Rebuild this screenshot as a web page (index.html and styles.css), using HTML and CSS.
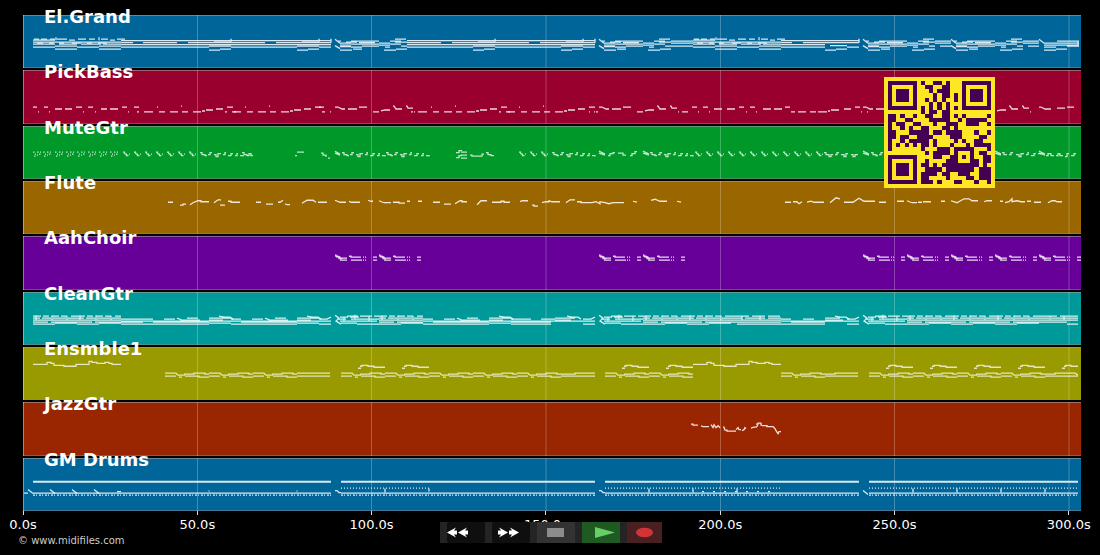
FILE: index.html
```html
<!DOCTYPE html>
<html lang="en">
<head>
<meta charset="utf-8">
<title>MIDI tracks</title>
<link rel="stylesheet" href="styles.css">
</head>
<body>
<svg class="defs" aria-hidden="true">
  <defs>
    <path id="grid" class="grid" d="M197.5 0v600M371.5 0v600M546 0v600M720.5 0v600M894.5 0v600M1069 0v600"/>
    <g id="pianoA">
      <path d="M0 40.5h22M0 42.5h88M0 44.5h22M26 44.5h18M48 44.5h20M70 44.5h18M0 47.5h22M44 47.5h22M22 46.5h22M66 46.5h22M22 49.5h22M66 49.5h22"/>
      <path d="M1 39.5h5m2 0h6m3 0h5m1-2v3m1-1h10m2 1h6m3-1h8m3 0h6m4-2v3m2-1h7m2 1h5m2-1h8M4 43.5h6m6 0h5m5 0h5m8 0h9m6 0h5m6 0h9"/>
    </g>
    <g id="pianoB">
      <path d="M0 41h88M0 43h12M23 43h11M45 43h43M12 43h11M0 45h88M0 47.500h66M66 50.500h11M77 49.500h11M66 46.500h22M71 42.500h17M88 39v3"/>
    </g>
    <g id="pianoLead">
      <path d="M0 41h22M0 43h12M0 45h22M0 47.500h22"/>
    </g>
    <g id="pianoC">
      <path d="M0 39.5l5 4M0 46l5 3M3 41.5h3M5 43.5h11M5 45.5h11M5 47h11M5 50.5h12M11 42.5h11M16 41.5h28M16 44.5h28M16 47.5h11M18 49.5h9M24 43h16M27 46.5h17M44 43.5h11M44 45.5h11M50 47.5h5M49 50.5h12M55 41.5h11M55 44.5h11M60 39.5h11M60 42.5h12M61 49.5h11M66 46.5h6"/>
    </g>
    <g id="pianoTail">
      <path d="M0 41h12M0 43h12M0 45h12M0 47.500h12M12 39v4"/>
    </g>
    <g id="bassB"><path d="M0 112.5h2m5 0h9m4-5h1m1 5h6m5 0h8m3-6h1m0 6h6m5 0h8m1-1h3m1-1h7m3-1h7m4-2h6m1 5h2"/></g>
    <g id="bassC"><path d="M0 107.5h3l4 2h3m3 0h9m2-2h8m6 5h6m2-1l4-1h5m3-4h1l2 3h6m4-3h1l1 2h5m1 4h1"/></g>
    <path id="hook" d="M0 151.5h1.500v1l1 1h1v1.500h2M6 153.5h1"/>
    <path id="buzz" d="M0 151.5h1.500M2 153.500h1M4 151.500h1.500M6 153.500h1.500M1 155.500h1.500M4 154.500h1M7 151.500h1"/>
    <g id="hooks"><use href="#hook"/><use href="#hook" x="11"/><use href="#hook" x="22"/></g>
    <path id="rattle" d="M0 152h2v2h3v1h2m1-1h2v-2h2m2 2h2v2h2v-3h3m2 1h2v-2h1m2 3h3v-2h2m2 2h2v-2h1m2 2h3v1"/>
    <g id="choir"><path d="M0 255.500h1v1h2v1h2v1h2M1 257h3v2h3M5 258.500h7M5 260.500h7M14 256.500h2v1h10M16 260.500h11M28 257.500h1M30 257.500h1M28 260.500h1M30 260.500h1M38 257.500h4M38 260.500h4"/></g>
    <g id="cleanA">
      <path d="M0 315.500h8m2 0h6m3 0h7m2 0h6m4 0h6M0 317.500h7m2 0h9m2 0h13m2 0h9M0 319.500h44M0 321.500h15m3 0h26M0 323.500h22M22 322.500h22M3 314.500v5M19 314.500v5M34 315v5"/>
    </g>
    <g id="cleanB"><path d="M0 318.500h10M0 320.500h88M10 321.500h56M21 318.500h11M34 317.500l5 2h5M44 317.500h11M42 319.500h15M66 317.500h22M66 319.500h14M76 315.500l5 1h6l3 2M66 322.500h22M0 323.500h66"/></g>
    <g id="cleanLead"><path d="M0 318.500h22M0 320.500h22M0 321.500h22M0 323.500h22"/></g>
    <g id="cleanTail"><path d="M0 318.500h8l4-2M0 320.500h12M0 323.500h12"/></g>
    <g id="cleanC"><path d="M0 314.500l4 3-3 3 5 3M2 318.500h9M5 320.500h37M5 316.500h8m2 0h9M16 318.500h28M12 315.500h11m2 0h12m2 0h5M6 322.500h16M22 323.500h22M9 316v5M20 314v5M34 315v5"/></g>
    <path id="ensHi" d="M0 368.500h3M2 366.500h2v-1h6v1h6v1h11"/>
    <path id="ensTune" d="M0 364.500h14v-2h4v1h3v2h10v1h12v-2h13v-3h3v1h5v1h8v-1h4v1h3v1h9"/>
    <path id="ensLo" d="M0 373.500h11l2 2h7M0 376.500h11M14 377.500h3M19 374.500h10v-1h11v1h4M20 376.500h14v1h10"/>
    <g id="ensRow"><use href="#ensLo"/><use href="#ensLo" x="44"/></g>
  </defs>
</svg>

<main class="player">
  <div class="chart">
    <section class="track blue"><h2>El.Grand</h2>
      <svg viewBox="23 15 1058 54" preserveAspectRatio="none"><use href="#grid"/>
        <g class="notes">
          <use href="#pianoA" x="33"/><use href="#pianoLead" x="121"/><use href="#pianoB" x="143"/><use href="#pianoB" x="231"/><use href="#pianoTail" x="319"/>
          <use href="#pianoC" x="335"/><use href="#pianoB" x="407"/><use href="#pianoB" x="495"/><use href="#pianoTail" x="583"/>
          <use href="#pianoC" x="599"/><path d="M671 41.500h22M671 43.500h22M671 46.500h22"/><use href="#pianoA" x="693"/>
          <path d="M781 41h78M781 43h11M803 43h22M781 45h44M781 47.500h44M825 43h34M825 50.500h11M836 49.500h11M830 46h17M847 47.500h12M859 39v4"/>
          <use href="#pianoC" x="863"/><path d="M935 41.500h16M935 43.500h16M940 46.500h11"/><use href="#pianoC" x="951"/><path d="M1023 41.500h16M1023 43.500h16M1028 46.500h11"/>
          <path d="M1039 39.500l5 4h35M1044 45.500h35M1044 47.500h12M1044 50.500h12M1056 49.500h11M1057 41.500h22M1067 46.500h12M1078 41v6"/>
        </g></svg>
    </section>
    <section class="track crimson"><h2>PickBass</h2>
      <svg viewBox="23 70 1058 54" preserveAspectRatio="none"><use href="#grid"/>
        <g class="notes">
          <path d="M33 107.500h4m1 5h1m5-5h4m1 5h1m5-3h7m3 0h7m4-2h6m1 5h1m4-5h5m2 5h1m5-3h6m3 0h8m4-2h5m1 5h1m5-5h5"/>
          <use href="#bassB" x="137"/><use href="#bassB" x="225"/><path d="M319 107.500h5m0 5h1m5 0h1"/>
          <use href="#bassC" x="335"/><use href="#bassB" x="411"/><use href="#bassB" x="499"/><path d="M589 112.500h1m4 0h1"/>
          <use href="#bassC" x="599"/>
          <path d="M682 112.500h6M692 107.500h5m1 5h1m4-5h5m1 5h1m4-3h8m5 0h8m4-2h5m2 5h1m3-5h5m1 5h1m6-3h8m3 0h8m3-2h5m1 5h4m3 0h8m4 0h6m2 0h9m1-1h2m1-1h8m5-1h7m4-2h5m1 5h1m5 0h1"/>
          <use href="#bassC" x="863"/><use href="#bassC" x="951"/><path d="M1039 107.500h2l4 2h6m6-1h8m2-1h7"/>
        </g></svg>
    </section>
    <section class="track green"><h2>MuteGtr</h2>
      <svg viewBox="23 125 1058 54" preserveAspectRatio="none"><use href="#grid"/>
        <g class="notes soft">
          <use href="#buzz" x="33"/><use href="#buzz" x="43"/><use href="#buzz" x="55"/><use href="#buzz" x="66"/><use href="#buzz" x="77"/><use href="#buzz" x="88"/><use href="#buzz" x="99"/><use href="#buzz" x="110"/>
          <use href="#hooks" x="123"/><use href="#hooks" x="156"/><use href="#hook" x="189"/><use href="#rattle" x="200"/><path d="M242 152h2v2h3v1h2v-2h2v2h2"/>
          <path d="M295 155h2M297 151.500h7M321 152.500h2v2h3v2M328 157.500h2"/>
          <path d="M335 150.500l5 3M335 152.500l5 2"/><use href="#rattle" x="342"/><use href="#rattle" x="386"/>
          <path d="M456 152h3v-2h3M456 157h3v-2h3M461 151.500h6M461 154.500h6M461 157.500h6"/><path d="M470 154.500h2v1h10v-2h2M486 152h2v2h3v1h3"/>
          <use href="#hooks" x="519"/><use href="#rattle" x="552"/>
          <path d="M599 150.500l6 3M599 152.500l6 2"/><path d="M608 155h2v-2h3v-1h2M618 152.500h5v2h3M630 155h2v-2h3v-2h2"/><path d="M643 150.500l6 3M643 152.500l6 2"/><use href="#rattle" x="650"/>
          <use href="#hooks" x="695"/><use href="#hooks" x="728"/><use href="#hooks" x="761"/><use href="#hooks" x="794"/><path d="M824 152h2v2h3v2h2v-2h2m2 0h2v-2h2m2 2h3v2h2v-3h2m3 1h2v2h2v-2h3"/>
          <path d="M863 150.500l6 3M863 152.500l6 2"/><use href="#rattle" x="871"/><path d="M995 150.500l6 3M995 152.500l6 2"/><path d="M1002 152h2v2h3m2 0h2v-2h2m3 2h3v2h2v-3h3m2 1h2v-2h1m2 3h3v-2h2m2 0h3"/><path d="M1039 150.500l6 3M1039 152.500l6 2M1046 155h2v-2h3v2h3m2 0h2v-2h2v2h3m2 1h2v-3h2m2 2h3v-2h2"/>
        </g></svg>
    </section>
    <section class="track brown"><h2>Flute</h2>
      <svg viewBox="23 181 1058 54" preserveAspectRatio="none"><use href="#grid"/>
        <g class="notes">
          <path d="M168 202.500h5M180 205.500h3v-1h3M190 205l3-2 5-2h3v1h8M214 203l4-3h3M220 205.500h5M228 201.500h3v1h9M256 202.500h5M266 204.500h7M278 202.500h2l3-2M285 204l2 1h3M302 203.500l5-3h6l3 2M318 202.500h9M335 200.500l5 2h6M349 201.500l2 1h9"/>
          <path d="M368 200.500l3 1h2M379 201l5 2h7M393 202.500h6v1h6M407 201.500h3M418 201.500h4M433 202.500h7M444 204.500h7M455 204l5-3h2v1h5M477 205l4-4h6M492 202.500h9v-1h3v1h6M520 202l2-1h6M532 205.500h2v1h4M542 203l4-1h3v-1l3 1h8M566 203l4-3h5M577 202h4v1h11l4-1 4 2v-2l5 1 4 1 4-1h11M633 201.500l4 1M651 200.500l4-1 5 2h7M677 201.500l4 1"/>
          <path d="M785 202.500h6M793 202h4l2 2 3-2M807 202.500l4-1 3 1h10M830 203l6-5 4 1M844 202.500h9l6-4 5 3h11M879 202.500h7M897 201.500h7M907 201l5 2h5M918 202.500h4M923 202h8M941 201.500h4M951 201l6 2 7-4h5l3 2h6M984 202l3-1h5M1000 201.500h3M1005 203l4-1 3-3v3l5-1 4 1h4M1027 201.500h4M1034 202.500h7M1048 203l4-2h3l2 1h5"/>
        </g></svg>
    </section>
    <section class="track purple"><h2>AahChoir</h2>
      <svg viewBox="23 236 1058 54" preserveAspectRatio="none"><use href="#grid"/>
        <g class="notes">
          <use href="#choir" x="335"/><use href="#choir" x="379"/><use href="#choir" x="599"/><use href="#choir" x="643"/><use href="#choir" x="863"/><use href="#choir" x="907"/><use href="#choir" x="951"/><use href="#choir" x="995"/><use href="#choir" x="1039"/>
        </g></svg>
    </section>
    <section class="track teal"><h2>CleanGtr</h2>
      <svg viewBox="23 291 1058 54" preserveAspectRatio="none"><use href="#grid"/>
        <g class="notes">
          <use href="#cleanA" x="33"/><use href="#cleanA" x="77"/><use href="#cleanLead" x="121"/><use href="#cleanB" x="143"/><use href="#cleanB" x="231"/><use href="#cleanTail" x="319"/>
          <use href="#cleanC" x="335"/><use href="#cleanA" x="379"/><use href="#cleanB" x="423"/><path d="M511 318.500h20M511 320.500h72M511 321.500h40M541 318.500h14M555 317.500h20M555 319.500h16M567 315.500l5 1h6l3 2M511 323.500h40"/><use href="#cleanTail" x="583"/>
          <use href="#cleanC" x="599"/><use href="#cleanA" x="643"/><use href="#cleanA" x="687"/><path d="M731 315.500h18m3 0h13m3 0h12M731 317.500h11m3 0h20m3 0h13M731 319.500h50M731 321.500h50M737 323.500h44M742 315v5M760 315v5"/>
          <path d="M781 318.500h10M781 320.500h66M791 321.500h34M803 318.500h11M781 323.500h44M825 317.500h15M825 319.500h18M835 315.500l5 1h6l3 2"/><use href="#cleanTail" x="847"/>
          <use href="#cleanC" x="863"/><use href="#cleanA" x="907"/><use href="#cleanA" x="951"/><use href="#cleanA" x="995"/><path d="M1039 315.500h18m3 0h18M1039 317.500h10m2 0h27M1039 319.500h39M1039 321.500h28M1067 323.500h11M1050 315v5M1064 315v5"/>
        </g></svg>
    </section>
    <section class="track olive"><h2>Ensmble1</h2>
      <svg viewBox="23 347 1058 54" preserveAspectRatio="none"><use href="#grid"/>
        <g class="notes soft">
          <use href="#ensTune" x="33"/><use href="#ensTune" x="693"/>
          <use href="#ensHi" x="358"/><use href="#ensHi" x="402"/><use href="#ensHi" x="622"/><use href="#ensHi" x="666"/><use href="#ensHi" x="886"/><use href="#ensHi" x="930"/><use href="#ensHi" x="974"/><use href="#ensHi" x="1018"/><path d="M1062 368.500h3M1064 366.500h2v-1h5v1h7"/>
          <use href="#ensRow" x="165"/><use href="#ensLo" x="253"/><path d="M297 373.500h33M297 376.500h33"/>
          <use href="#ensRow" x="341"/><use href="#ensRow" x="429"/><use href="#ensLo" x="517"/><path d="M561 374.500h14v-1h20M561 376.500h34"/>
          <use href="#ensRow" x="605"/><use href="#ensLo" x="781"/><path d="M825 374.500h10v-1h23M825 376.500h33"/>
          <use href="#ensRow" x="869"/><use href="#ensRow" x="957"/><path d="M1045 374.500h10v-1h20l3 2M1045 376.500h33"/>
        </g></svg>
    </section>
    <section class="track rust"><h2>JazzGtr</h2>
      <svg viewBox="23 402 1058 54" preserveAspectRatio="none"><use href="#grid"/>
        <g class="notes">
          <path d="M691 424.500h2v1h5M701 426l2 1h6M711 425l2 3 1-3 2 3 2-2 2 2M723 427.500h1l1 3h2v1h6M733 431.500h3M736 430l2-2 1 2h2M742 431l2-1 1-2 1 1M751 428.500l3-1h2l2-2M756 424.500h2v-1h3v2h1M762 426h5v1h6l2 2 1 2 2 3 1-2h2"/>
        </g></svg>
    </section>
    <section class="track blue"><h2>GM Drums</h2>
      <svg viewBox="23 457 1058 54" preserveAspectRatio="none"><use href="#grid"/>
        <g class="notes">
          <path class="thick" d="M33 481h298M341 481h254M605 481h254M869 481h209"/>
          <path d="M33 492.500h298M341 492.500h254M605 492.500h254M869 492.500h209"/>
          <path class="kick" d="M33 494.500h298M341 494.500h254M605 494.500h254M869 494.500h209"/>
          <path class="hat" d="M341 487.500h88M605 487.500h176M869 487.500h209"/>
          <path d="M24 492.500h4M28 489l5 4M50 489l5 4M72 489l5 4M94 489l5 4M117 491h4M335 490h2l2 2h2M599 490h2l2 2h2M863 490l5 4M209 490v1M297 490v1M385 488v4M429 488v3M649 488v4M693 488v4M702 491h2M713 491h2M724 491h2M735 491h2M746 491h2M757 491h2M768 491h2M737 488v4M913 488v4M957 488v4M1001 488v4M1045 488v4"/>
        </g></svg>
    </section>

    <svg class="qr" viewBox="-1 -1 27 27" role="img" aria-label="QR code">
      <rect class="paper" x="-1" y="-1" width="27" height="27"/>
      <g class="finder">
        <path d="M.5.5h6v6h-6zM18.500.5h6v6h-6zM.5 18.500h6v6h-6zM16.500 16.500h4v4h-4z"/>
        <path class="dot" d="M2 2h3v3h-3zM20 2h3v3h-3zM2 20h3v3h-3zM18 18h1v1h-1z"/>
      </g>
      <path class="cells" d="M8 .5h1m2 0h2m1 0h1M9 1.500h2m2 0h2M10 2.500h1m1 0h3M11 3.500h1m1 0h2m1 0h1M9 4.500h1m1 0h1m1 0h1m2 0h1M10 5.500h1m1 0h1m1 0h1M8 6.500h1m1 0h1m1 0h1m1 0h1m1 0h1M8 7.500h1m1 0h2m1 0h2
      M0 8.500h2m1 0h1m2 0h1m2 0h2m2 0h2m1 0h1m1 0h1m5 0h1
      M0 9.500h2m2 0h2m4 0h5m2 0h1m1 0h5
      M0 10.500h1m1 0h2m2 0h2m3 0h1m2 0h3m2 0h3m2 0h1
      M0 11.500h1m2 0h1m1 0h1m2 0h2m3 0h2m1 0h1
      M0 12.500h2m3 0h5m1 0h2m1 0h4m3 0h1m2 0h1
      M0 13.500h2m1 0h2m2 0h4m4 0h3m4 0h2
      M0 14.500h1m2 0h1m1 0h5m1 0h1m4 0h1m1 0h1m2 0h2
      M0 15.500h1m1 0h1m1 0h1m1 0h1m1 0h2m1 0h1m3 0h1m3 0h1m1 0h4
      M0 16.500h1m7 0h1m3 0h3m9 0h1M9 17.500h1m1 0h4m7 0h2M11 18.500h2m2 0h1m7 0h2
      M9 19.500h1m4 0h2m5 0h1m1 0h2M8 20.500h2m1 0h1m1 0h3m5 0h1m1 0h1M9 21.500h4m1 0h7m1 0h3
      M8 22.500h4m1 0h2m2 0h3m2 0h3M8 23.500h2m4 0h1m4 0h2m1 0h3M8 24.500h3m1 0h1m3 0h2m3 0h1m2 0h1"/>
    </svg>
  </div>

  <div class="axis">
    <span>0.0s</span><span>50.0s</span><span>100.0s</span><span>150.0s</span><span>200.0s</span><span>250.0s</span><span>300.0s</span>
  </div>
  <footer>© www.midifiles.com</footer>

  <div class="controls">
    <button class="seek" aria-label="Rewind"><svg viewBox="0 0 38 21"><path d="M0 10.500l9-5-2 3h3v4h-3l2 3zM11 10.500l9-5-2 3h3v4h-3l2 3z"/></svg></button>
    <button class="seek" aria-label="Fast forward"><svg viewBox="0 0 38 21"><path d="M16 10.500l-9-5 2 3h-3v4h3l-2 3zM27 10.500l-9-5 2 3h-3v4h3l-2 3z"/></svg></button>
    <button class="stop" aria-label="Stop"><svg viewBox="0 0 38 21"><path d="M10 6h17v9h-17z"/></svg></button>
    <button class="play" aria-label="Play"><svg viewBox="0 0 38 21"><path d="M13 5l20 5.500-20 5.500z"/></svg></button>
    <button class="record" aria-label="Record"><svg viewBox="0 0 35 21"><ellipse cx="17.500" cy="10.500" rx="8.500" ry="4.800"/></svg></button>
  </div>
</main>
</body>
</html>
```

FILE: styles.css
```css
* {
  box-sizing: border-box;
}

body {
  margin: 0;
  background: #000;
  color: #fff;
  font-family: "DejaVu Sans", sans-serif;
}

.defs {
  position: absolute;
  width: 0;
  height: 0;
}

.player {
  position: relative;
  display: flex;
  flex-direction: column;
  min-height: 100vh;
  padding: 15px 19px 7px 23px;
}

.chart {
  position: relative;
  flex: 1;
  display: grid;
  grid-template-rows: repeat(9, 1fr);
  gap: 2px;
}

.track {
  position: relative;
  min-height: 40px;
  box-shadow: inset 1px 0 rgba(255, 255, 255, 0.4), inset 0 1px rgba(160, 160, 160, 0.6), inset 0 -1px rgba(140, 140, 140, 0.5);
}

.track h2 {
  position: absolute;
  z-index: 1;
  top: -8px;
  left: 21px;
  margin: 0;
  font-size: 18px;
  line-height: 20px;
}

.track svg {
  position: absolute;
  inset: 0;
  width: 100%;
  height: 100%;
}

.blue { background: #006699; }
.crimson { background: #99002e; }
.green { background: #009929; }
.brown { background: #996600; }
.purple { background: #660099; }
.teal { background: #009999; }
.olive { background: #999900; }
.rust { background: #992600; }

.grid {
  fill: none;
  stroke: #fff;
  stroke-opacity: 0.25;
  stroke-width: 1;
}

.notes {
  fill: none;
  stroke: #fff;
  stroke-opacity: 0.85;
  stroke-width: 1.3;
}

.notes.soft {
  stroke-opacity: 0.75;
}

.thick {
  stroke-width: 2;
}

.kick {
  stroke-dasharray: 2 1 1 2;
}

.hat {
  stroke-dasharray: 1 2;
}

.qr {
  position: absolute;
  z-index: 2;
  top: 62px;
  right: 86px;
  width: 111px;
  height: 111px;
  shape-rendering: crispEdges;
}

.paper {
  fill: #fde725;
}

.finder,
.cells {
  fill: none;
  stroke: #440154;
  stroke-width: 1;
}

.dot {
  fill: #440154;
  stroke: none;
}

.axis {
  display: grid;
  grid-template-columns: repeat(6, 16.475%) 0;
  height: 23px;
  font-size: 13px;
  line-height: 20px;
}

.axis span {
  display: flex;
  flex-direction: column;
  align-items: center;
  width: 0;
  white-space: nowrap;
}

.axis span::before {
  content: "";
  width: 1px;
  height: 4px;
  flex: none;
  background: #ddd;
}

footer {
  margin-left: -5px;
  color: #ccc;
  font-size: 10px;
  line-height: 14px;
}

.controls {
  position: absolute;
  z-index: 3;
  bottom: 12px;
  left: 50%;
  transform: translateX(-50%);
  display: grid;
  grid-template-columns: repeat(4, 38px) 35px;
  gap: 7px;
  height: 21px;
  padding-left: 7px;
  margin-left: 1px;
  background: #242424;
}

.controls button {
  padding: 0;
  border: 0;
  cursor: pointer;
}

.controls svg {
  display: block;
  width: 100%;
  height: 21px;
}

.seek {
  background: #0f0f0f;
  fill: #fff;
  border-radius: 2px;
}

.stop {
  background: #333;
  fill: #8c8c8c;
}

.play {
  background: #1f5a22;
  fill: #66d066;
}

.record {
  background: #482022;
  fill: #d03434;
}
```
